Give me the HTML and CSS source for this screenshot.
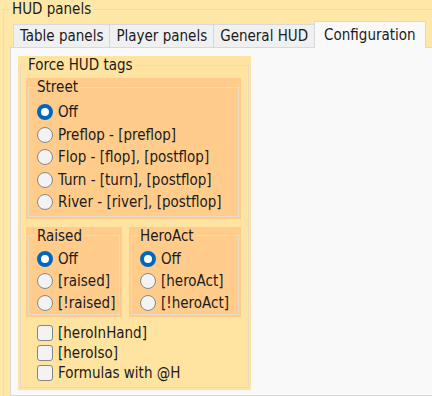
FILE: index.html
```html
<!DOCTYPE html>
<html lang="en">
<head>
  <meta charset="UTF-8">
  <meta name="viewport" content="width=device-width, initial-scale=1.0">
  <title>HUD panels</title>
  <link rel="stylesheet" href="styles.css">
</head>
<body>
  <fieldset class="hud-panels">
    <legend>HUD panels</legend>

    <div class="tabs">
      <div class="tab">Table panels</div>
      <div class="tab">Player panels</div>
      <div class="tab">General HUD</div>
      <div class="tab active">Configuration</div>
    </div>

    <div class="tab-page">
      <div class="group group-tags">
        <fieldset>
          <legend>Force HUD tags</legend>

          <div class="group group-street">
            <fieldset>
              <legend>Street</legend>
              <label class="option"><input type="radio" name="street" checked>Off</label>
              <label class="option"><input type="radio" name="street">Preflop - [preflop]</label>
              <label class="option"><input type="radio" name="street">Flop - [flop], [postflop]</label>
              <label class="option"><input type="radio" name="street">Turn - [turn], [postflop]</label>
              <label class="option"><input type="radio" name="street">River - [river], [postflop]</label>
            </fieldset>
          </div>

          <div class="pair">
            <div class="group group-raised">
              <fieldset>
                <legend>Raised</legend>
                <label class="option short"><input type="radio" name="raised" checked>Off</label>
                <label class="option short"><input type="radio" name="raised">[raised]</label>
                <label class="option short"><input type="radio" name="raised">[!raised]</label>
              </fieldset>
            </div>
            <div class="group group-heroact">
              <fieldset>
                <legend>HeroAct</legend>
                <label class="option short"><input type="radio" name="heroact" checked>Off</label>
                <label class="option short"><input type="radio" name="heroact">[heroAct]</label>
                <label class="option short"><input type="radio" name="heroact">[!heroAct]</label>
              </fieldset>
            </div>
          </div>

          <div class="checks">
            <label class="option check"><input type="checkbox">[heroInHand]</label>
            <label class="option check"><input type="checkbox">[heroIso]</label>
            <label class="option check"><input type="checkbox">Formulas with @H</label>
          </div>
        </fieldset>
      </div>
    </div>
  </fieldset>
</body>
</html>
```

FILE: styles.css
```css
body {
  margin: 0;
  width: 432px;
  height: 396px;
  overflow: hidden;
  background-color: #ffe7a8;
  font-family: "DejaVu Sans Condensed", "Liberation Sans", sans-serif;
  font-size: 15px;
  line-height: 18px;
  color: #1b1b1b;
}
fieldset {
  margin: 0;
  border: 1px solid #e8dcc6;
  min-width: 0;
}
legend {
  padding: 0 2px;
  line-height: 18px;
}

/* outer group */
.hud-panels {
  margin-left: 3px;
  width: 440px;
  padding: 3px 0 0 6px;
  box-sizing: border-box;
}

/* tabs */
.tabs {
  display: flex;
  align-items: flex-end;
  padding-left: 3px;
}
.tab {
  height: 23px;
  padding: 0 6px;
  display: flex;
  align-items: center;
  box-sizing: border-box;
  background-color: #f0f0f0;
  border: 1px solid #d9d9d9;
  border-bottom: none;
  margin-left: -1px;
}
.tab:first-child {
  margin-left: 0;
}
.tab.active {
  height: 27px;
  padding: 0 9px 1px;
  margin-bottom: -1px;
  background-color: #f9f9f9;
  position: relative;
  z-index: 1;
}
.tab-page {
  height: 349px;
  box-sizing: border-box;
  background-color: #f9f9f9;
  border: 1px solid #d9d9d9;
  padding: 8px 0 0 7px;
}

/* coloured group boxes */
.group {
  padding: 0 2px 2px;
}
.group-tags {
  width: 233px;
  box-sizing: border-box;
  background-color: #ffe3a0;
}
.group-tags > fieldset {
  padding: 4px 7px 4px 5px;
}
.group-street,
.group-raised,
.group-heroact {
  background-color: #ffcc8c;
}
.group-street > fieldset {
  padding: 5px 6px 2px;
}
.pair {
  display: flex;
  gap: 7px;
  margin-top: 8px;
}
.group-raised {
  width: 96px;
  box-sizing: border-box;
}
.group-heroact {
  width: 112px;
  box-sizing: border-box;
}
.group-raised > fieldset,
.group-heroact > fieldset {
  padding: 3px 6px 0;
}

/* radio / checkbox rows */
.option {
  display: flex;
  align-items: center;
  height: 22.5px;
  padding-left: 2px;
  white-space: nowrap;
}
.option.short {
  height: 22px;
}
.checks {
  margin-top: 6px;
  padding-left: 11px;
}
.option.check {
  height: 20px;
  padding-left: 0;
}
.option input {
  -webkit-appearance: none;
  appearance: none;
  width: 16px;
  height: 16px;
  margin: 0 5px 0 0;
  box-sizing: border-box;
  border: 1px solid #868686;
  background-color: #f3f3f3;
  flex-shrink: 0;
}
input[type="radio"] {
  border-radius: 50%;
}
input[type="radio"]:checked {
  border: 4.5px solid #0067c0;
  background-color: #ffffff;
}
input[type="checkbox"] {
  border-radius: 3px;
}
```
